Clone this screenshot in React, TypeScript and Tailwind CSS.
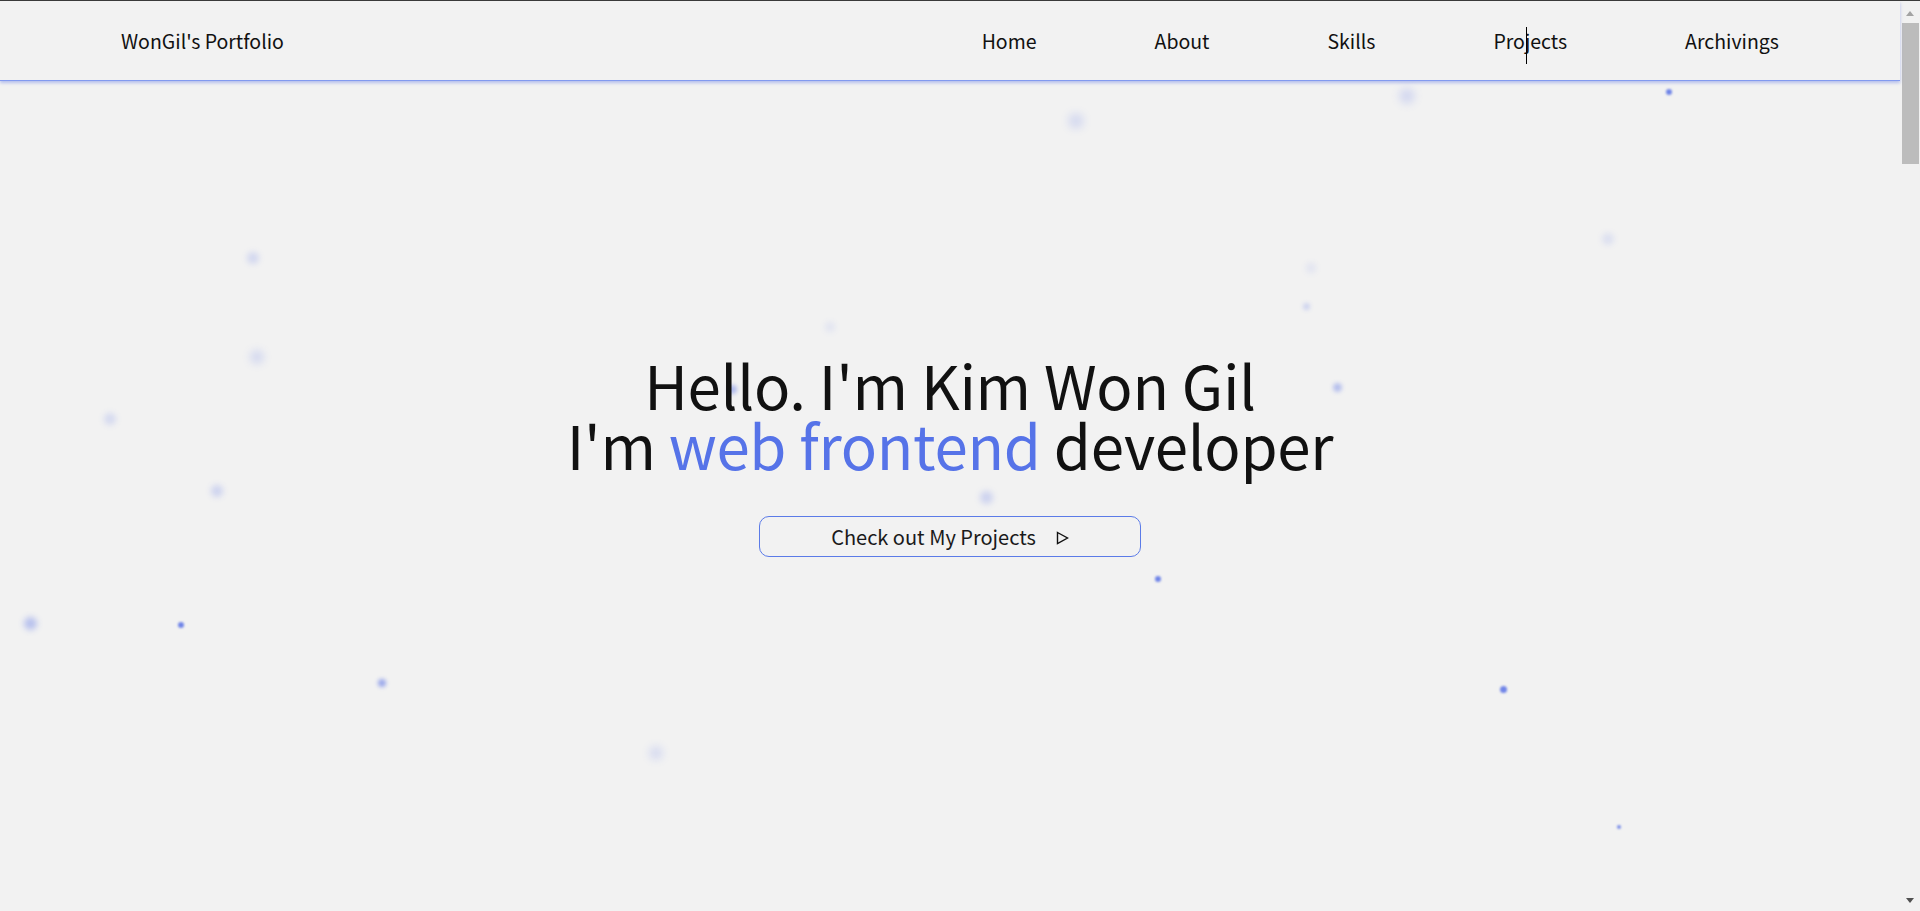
import React from 'react';

const NAV = ['Home', 'About', 'Skills', 'Projects', 'Archivings'];

// particles scattered over the hero: x, y, size, blur, opacity
const DOTS: [number, number, number, number, number][] = [
  [1076, 121, 16, 4, 0.18],
  [1407, 96, 16, 4, 0.2],
  [1669, 92, 6, 1, 0.85],
  [253, 258, 12, 3, 0.22],
  [1608, 239, 12, 3, 0.15],
  [1311, 268, 10, 3, 0.12],
  [1306, 306, 7, 2, 0.25],
  [830, 327, 10, 3, 0.12],
  [257, 357, 14, 4, 0.2],
  [1337, 387, 9, 2, 0.4],
  [732, 389, 9, 2, 0.45],
  [110, 419, 12, 3, 0.2],
  [217, 491, 12, 3, 0.25],
  [986, 497, 13, 3, 0.25],
  [1158, 579, 6, 1, 0.85],
  [30, 623, 13, 3, 0.4],
  [181, 625, 6, 1, 0.85],
  [382, 683, 8, 2, 0.6],
  [656, 753, 14, 4, 0.18],
  [1503, 689, 7, 1, 0.85],
  [1619, 827, 4, 1, 0.8],
];

const font = { fontFamily: '"Noto Sans CJK KR", "Noto Sans", sans-serif' };

const App: React.FC = () => {
  return (
    <div className="h-[911px] w-full overflow-hidden bg-[#f2f2f2] border-t border-[#3a3a3a] flex" style={font}>
      <div className="relative flex-1 flex flex-col">
        {DOTS.map(([x, y, s, b, o], i) => (
          <span
            key={i}
            className="absolute rounded-full bg-[#5a72e6] pointer-events-none"
            style={{ left: x - s / 2, top: y - 1 - s / 2, width: s, height: s, filter: `blur(${b}px)`, opacity: o }}
          />
        ))}

        <header className="relative h-[80px] shrink-0 flex items-center justify-between px-[121px] border-b border-[#829af0] shadow-[0_2px_3px_rgba(90,114,230,0.4)]">
          <div className="text-[19.5px] text-[#111]">WonGil's Portfolio</div>
          <nav className="flex gap-[118px] text-[19.5px] text-[#111]">
            {NAV.map((n) => (
              <a key={n} className="cursor-pointer">{n}</a>
            ))}
          </nav>
          <span className="absolute left-[1526px] top-[26px] w-px h-[37px] bg-black" />
        </header>

        <section className="relative flex-1 flex flex-col items-center pt-[273px]">
          <h1 className="text-[60px] leading-[60px] text-[#111] text-center font-normal tracking-[-0.3px]">
            Hello. I'm Kim Won Gil
            <br />
            I'm <span className="text-[#5673e8]">web frontend</span> developer
          </h1>
          <button className="mt-[42px] w-[382px] h-[41px] rounded-[10px] border border-[#5b7be8] flex items-center justify-center gap-[20px] text-[20px] text-[#1a1a1a]">
            <span>Check out My Projects</span>
            <svg width="13" height="14" viewBox="0 0 13 14" className="mt-[2px]">
              <path d="M1.5 1.5 L11.5 7 L1.5 12.5 Z" fill="none" stroke="#111" strokeWidth="1.4" strokeLinejoin="miter" />
            </svg>
          </button>
        </section>
      </div>

      <div className="w-[20px] shrink-0 bg-[#f1f1f1] flex flex-col items-center pt-[10px] pb-[8px]">
        <span className="w-0 h-0 border-l-[4px] border-r-[4px] border-b-[5px] border-l-transparent border-r-transparent border-b-[#a3a3a3]" />
        <span className="mt-[7px] ml-[1px] w-[17px] h-[141px] bg-[#bcbcbc]" />
        <span className="flex-1" />
        <span className="w-0 h-0 border-l-[4px] border-r-[4px] border-t-[5px] border-l-transparent border-r-transparent border-t-[#505050]" />
      </div>
    </div>
  );
};

export default App;
